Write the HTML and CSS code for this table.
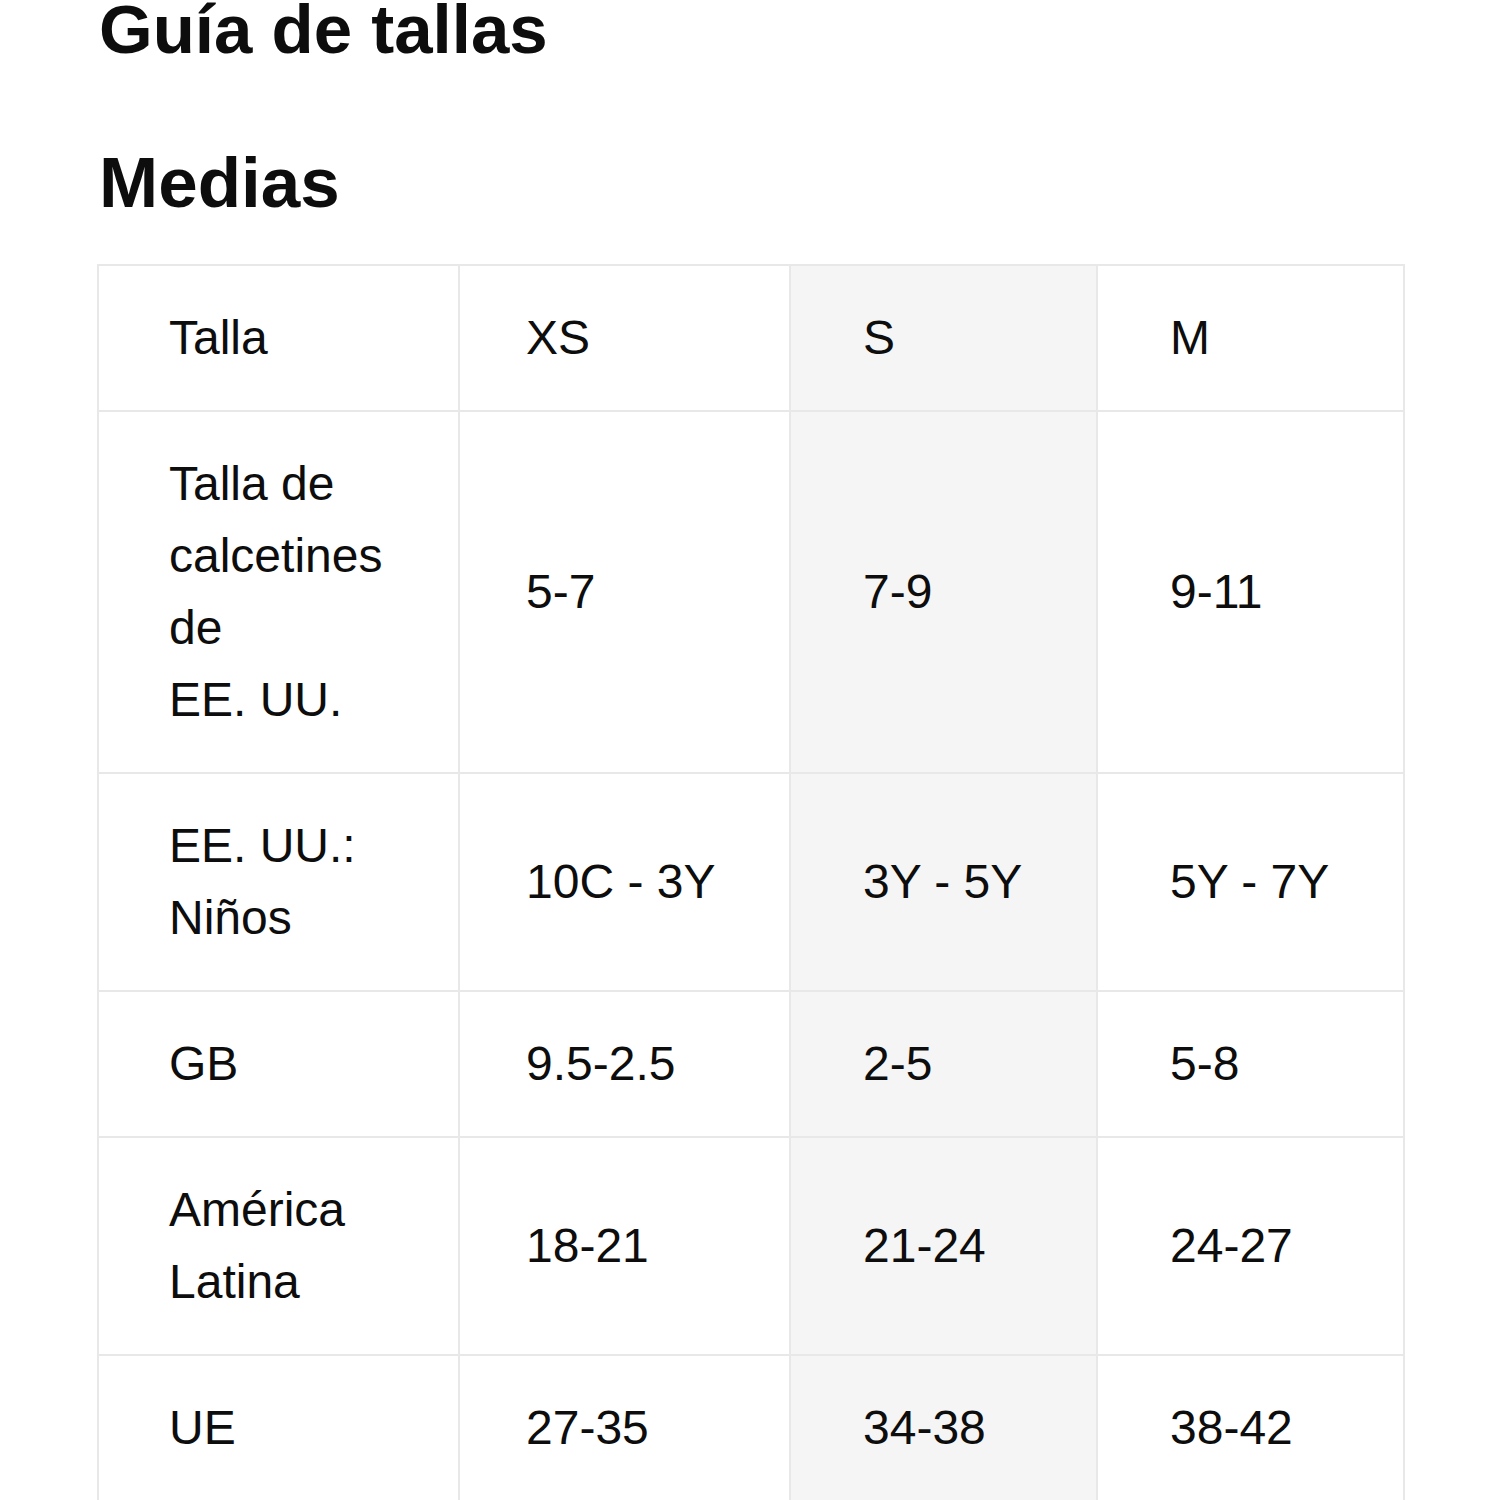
FILE: index.html
```html
<!DOCTYPE html>
<html lang="es">
<head>
<meta charset="utf-8">
<title>Guía de tallas</title>
<link rel="stylesheet" href="styles.css">
</head>
<body>
<main class="page">
  <h1 class="title">Guía de tallas</h1>
  <h2 class="subtitle">Medias</h2>
  <table class="sizes">
    <colgroup>
      <col class="c1"><col class="c2"><col class="c3"><col class="c4">
    </colgroup>
    <tbody>
      <tr><td>Talla</td><td>XS</td><td>S</td><td>M</td></tr>
      <tr><td>Talla de<br>calcetines<br>de<br>EE. UU.</td><td>5-7</td><td>7-9</td><td>9-11</td></tr>
      <tr><td>EE. UU.:<br>Niños</td><td>10C - 3Y</td><td>3Y - 5Y</td><td>5Y - 7Y</td></tr>
      <tr><td>GB</td><td>9.5-2.5</td><td>2-5</td><td>5-8</td></tr>
      <tr><td>América<br>Latina</td><td>18-21</td><td>21-24</td><td>24-27</td></tr>
      <tr><td>UE</td><td>27-35</td><td>34-38</td><td>38-42</td></tr>
    </tbody>
  </table>
</main>
</body>
</html>
```

FILE: styles.css
```css
html, body {
  margin: 0;
  padding: 0;
  background: #ffffff;
}

.page {
  padding-left: 97px;
  width: 1306px;
  font-family: "Liberation Sans", Arial, sans-serif;
  color: #0d0d0d;
}

.title {
  font-size: 69px;
  line-height: 70px;
  font-weight: bold;
  margin: -5px 0 0 2px;
}

.subtitle {
  font-size: 71px;
  line-height: 72px;
  font-weight: bold;
  margin: 82px 0 0 2px;
}

.sizes {
  margin-top: 45px;
  width: 1306px;
  table-layout: fixed;
  border-collapse: collapse;
  font-size: 48px;
  line-height: 72px;
}

.sizes .c1 { width: 361px; }
.sizes .c2 { width: 331px; }
.sizes .c3 { width: 307px; }
.sizes .c4 { width: 307px; }

.sizes td {
  border: 2px solid #e8e8e8;
  padding: 36px 10px 36px 70px;
  vertical-align: middle;
  text-align: left;
}

.sizes td:nth-child(2) { padding-left: 66px; }
.sizes td:nth-child(3) { padding-left: 72px; background: #f5f5f5; }
.sizes td:nth-child(4) { padding-left: 72px; }
```
